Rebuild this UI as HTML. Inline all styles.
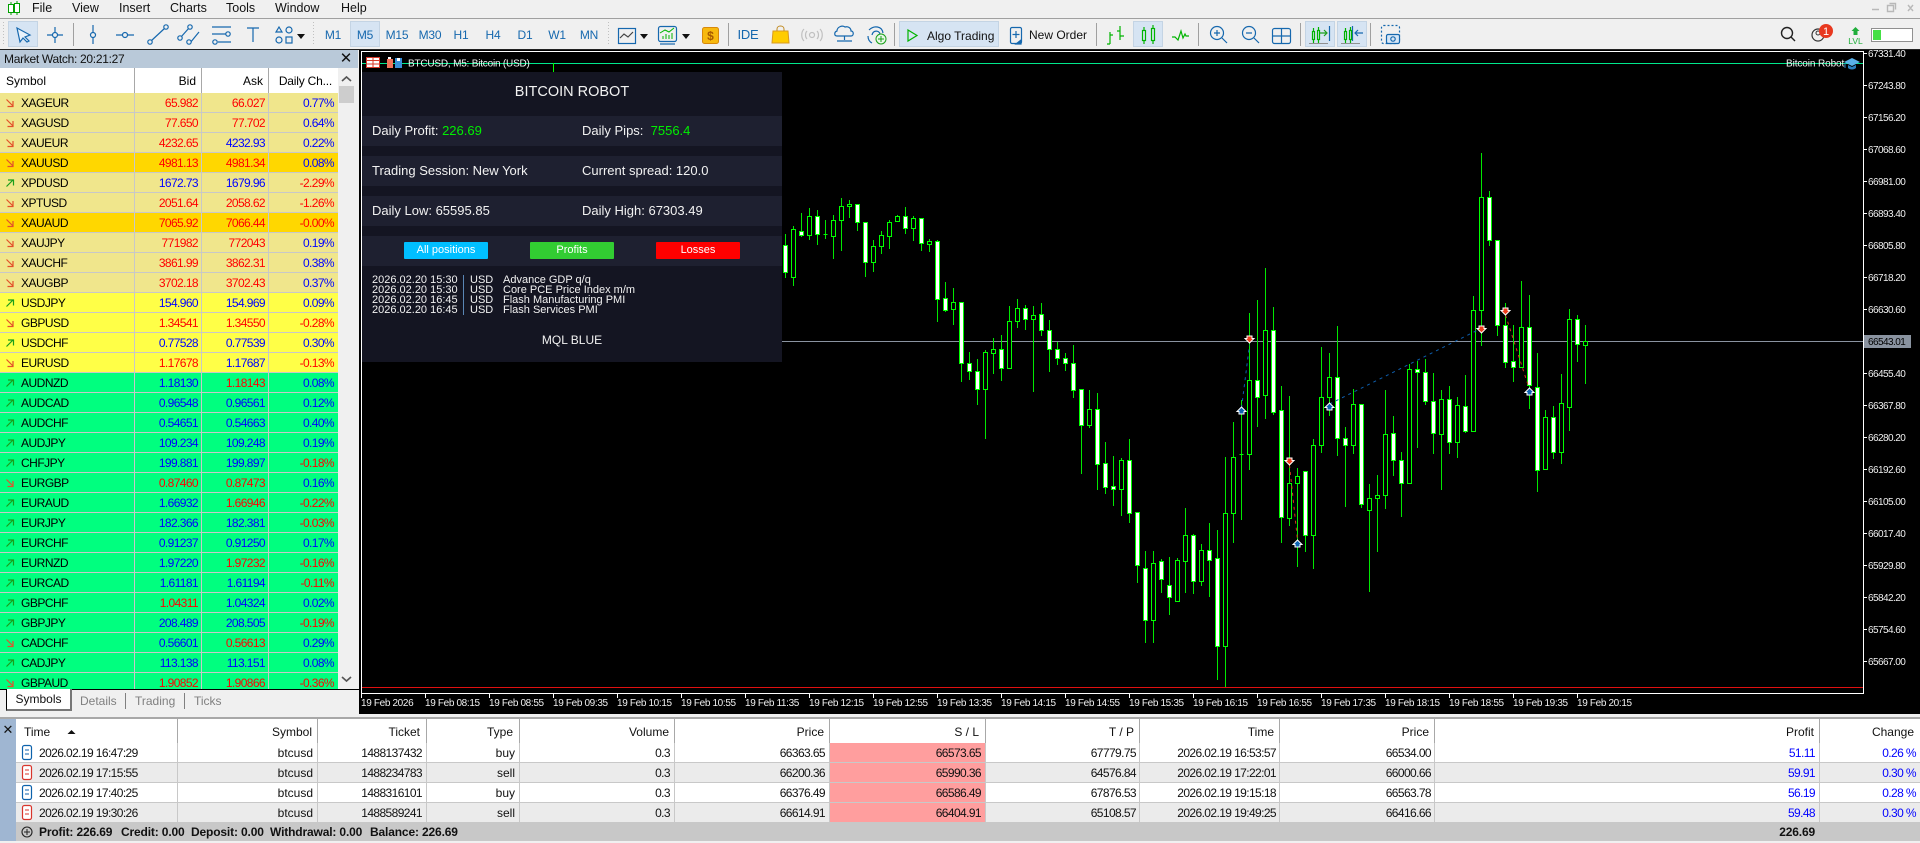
<!DOCTYPE html>
<html><head><meta charset="utf-8"><title>MT5</title>
<style>
html,body{margin:0;padding:0;background:#f0f0f0}
body{position:relative;width:1920px;height:841px;overflow:hidden;font:12px "Liberation Sans",sans-serif;color:#000}
.abs,.r,.m{position:absolute}
.m{top:0;height:16px;line-height:16px;font-size:12.5px;color:#111}
svg{position:absolute;left:0;top:0}
#mw{position:absolute;left:0;top:93px;width:338px;height:596px;overflow:hidden}
.r{left:0;width:338px;height:20px;box-sizing:border-box;border-bottom:1px solid #c8c8c8;line-height:21px}
.r i,.r b{position:absolute;top:0;font-style:normal;font-weight:normal;text-align:right;letter-spacing:-.6px}
.r i{left:21px;text-align:left;letter-spacing:-.5px}
.r b:nth-of-type(1){left:134px;width:64px}
.r b:nth-of-type(2){left:201px;width:64px}
.r b:nth-of-type(3){left:268px;width:66px}
.r u{position:absolute;top:0;width:1px;height:20px;background:#c8c8c8}
.r svg{left:5px;top:5px;width:10px;height:10px}
.k{background:#f0e68c}.g{background:#ffd700}.y{background:#ffff47}.s{background:#00ff7f}
.q{color:#f00!important}.w{color:#00f!important}
.h{position:absolute;top:69px;height:24px;line-height:24px;text-align:right}
.t{position:absolute;left:0;width:1920px;height:20px;box-sizing:border-box;border-bottom:1px solid #c8c8c8;line-height:21px}
.t span{position:absolute;top:0;left:0;text-align:right;color:#111;white-space:nowrap}
.t .n{letter-spacing:-.6px}
.t .p{color:#00f;letter-spacing:-.6px}
.th{position:absolute;top:722px;left:0;text-align:right;line-height:20px;color:#111}
.sl{position:absolute;left:830px;width:155px;height:19px;top:0;background:#ff9e9e}
#pn{position:absolute;left:362px;top:72px;width:420px;height:290px;background:#141522;color:#f2f2f2;font-size:13px}
#pn div{position:absolute}
.row{left:0;width:420px;height:30px;background:#1e2030}
.tx{line-height:30px;white-space:nowrap;top:0}
.btn{top:6px;width:84px;height:17px;line-height:17px;text-align:center;font-size:11px;color:#fff;border-radius:1px}
.nw{font-size:11px;line-height:10px;left:10px;white-space:nowrap}
.ft{position:absolute;top:822px;line-height:21px;font-weight:bold;color:#111;white-space:nowrap;letter-spacing:-.15px}
</style></head><body>

<!-- chart + chrome background -->
<div class="abs" style="left:0;top:18px;width:1920px;height:1px;background:#a0a0a0"></div>
<div class="abs" style="left:0;top:49px;width:1920px;height:1px;background:#222"></div>
<div class="abs" style="left:359px;top:50px;width:1561px;height:664px;background:#000"></div>
<div class="abs" style="left:0;top:717px;width:1920px;height:2px;background:#a8a8a8"></div>

<svg width="1920" height="841" viewBox="0 0 1920 841" font-family="Liberation Sans, sans-serif">
<!-- frame -->
<path d="M361.5 51.5H1863.5V693.5H361.5z" fill="none" stroke="#fff"/>
<path d="M362 63.5H1863" stroke="#00e88c"/>
<path d="M553.5 63V72" stroke="#00ff00"/>
<path d="M362 687.5H1863" stroke="#e01010"/>
<path d="M362 341.5H1863" stroke="#8a93a0"/>
<!-- candles -->
<g shape-rendering="crispEdges" stroke="#00e800" fill="none">
<path transform="translate(.5,0)" d="M785 234V278M793 226V286M801 213V237M809 208V240M817 210V245M825 220V239M833 215V259M841 198V251M849 200V218M857 204V231M865 222V277M873 240V272M881 231V254M889 220V249M897 215V222M905 207V234M913 216V241M921 218V251M929 239V252M937 240V322M945 282V312M953 288V325M961 302V382M969 352V380M977 359V405M985 350V439M993 338V374M1001 335V381M1009 306V369M1017 299V328M1025 305V330M1033 306V392M1041 303V336M1049 320V372M1057 342V365M1065 353V371M1073 345V398M1081 389V474M1089 390V428M1097 393V490M1105 442V494M1113 456V506M1121 458V516M1129 439V523M1137 512V583M1145 551V643M1153 551V643M1161 559V593M1169 557V615M1177 558V602M1185 508V593M1193 534V594M1201 544V586M1209 523V597M1217 530V680M1225 457V687M1233 422V543M1241 400V520M1249 313V470M1257 300V427M1265 268V419M1273 307V415M1281 386V543M1289 396V526M1297 468V567M1305 471V552M1313 439V569M1321 347V453M1329 353V416M1337 326V456M1345 427V507M1353 389V454M1361 404V508M1369 484V592M1377 475V552M1385 390V509M1393 416V476M1401 452V517M1409 364V484M1417 361V448M1425 359V405M1433 373V454M1441 390V490M1449 386V454M1457 397V458M1465 375V433M1473 296V431M1481 153V346M1489 191V246M1497 240V336M1505 303V368M1513 325V382M1521 281V368M1529 295V409M1537 353V492M1545 410V470M1553 406V459M1561 374V464M1569 309V431M1577 315V362M1585 325V384"/>
<path transform="translate(.5,.5)" stroke="#00ff00" fill="#fff" d="M783 245h4v27h-4zM799 231h4v4h-4zM815 216h4v18h-4zM855 204h4v18h-4zM863 222h4v40h-4zM903 216h4v12h-4zM919 218h4v25h-4zM935 241h4v58h-4zM943 298h4v12h-4zM959 302h4v61h-4zM967 363h4v8h-4zM975 371h4v18h-4zM999 349h4v19h-4zM1023 308h4v11h-4zM1039 314h4v16h-4zM1047 330h4v19h-4zM1055 349h4v9h-4zM1063 358h4v5h-4zM1071 363h4v27h-4zM1079 389h4v36h-4zM1095 409h4v55h-4zM1103 463h4v24h-4zM1111 486h4v3h-4zM1127 460h4v53h-4zM1135 512h4v53h-4zM1143 568h4v52h-4zM1159 561h4v18h-4zM1167 585h4v12h-4zM1191 535h4v46h-4zM1207 550h4v10h-4zM1215 558h4v88h-4zM1255 380h4v17h-4zM1271 330h4v82h-4zM1279 410h4v107h-4zM1303 471h4v64h-4zM1335 377h4v61h-4zM1343 438h4v7h-4zM1359 404h4v100h-4zM1391 433h4v27h-4zM1399 460h4v23h-4zM1415 369h4v3h-4zM1423 372h4v29h-4zM1431 401h4v32h-4zM1447 399h4v43h-4zM1463 406h4v25h-4zM1487 197h4v43h-4zM1495 240h4v85h-4zM1503 325h4v37h-4zM1511 361h4v6h-4zM1527 327h4v58h-4zM1535 387h4v83h-4zM1551 417h4v35h-4zM1575 319h4v25h-4z"/>
<path transform="translate(.5,.5)" stroke="#00ff00" fill="#000" d="M791 229h4v48h-4zM807 216h4v19h-4zM823 234h4v0h-4zM831 220h4v16h-4zM839 206h4v14h-4zM847 204h4v2h-4zM871 246h4v16h-4zM879 235h4v11h-4zM887 222h4v14h-4zM895 216h4v5h-4zM911 218h4v10h-4zM927 241h4v3h-4zM951 302h4v7h-4zM983 352h4v37h-4zM991 349h4v4h-4zM1007 321h4v47h-4zM1015 308h4v13h-4zM1031 315h4v4h-4zM1087 409h4v16h-4zM1119 460h4v29h-4zM1151 563h4v57h-4zM1175 560h4v41h-4zM1183 535h4v26h-4zM1199 550h4v31h-4zM1223 513h4v133h-4zM1231 457h4v56h-4zM1239 454h4v0h-4zM1247 380h4v74h-4zM1263 330h4v65h-4zM1287 483h4v35h-4zM1295 476h4v7h-4zM1311 445h4v90h-4zM1319 397h4v48h-4zM1327 377h4v20h-4zM1351 404h4v41h-4zM1367 498h4v12h-4zM1375 495h4v3h-4zM1383 434h4v61h-4zM1407 369h4v114h-4zM1439 399h4v35h-4zM1455 405h4v37h-4zM1471 310h4v121h-4zM1479 197h4v113h-4zM1519 327h4v40h-4zM1543 417h4v52h-4zM1559 403h4v49h-4zM1567 319h4v88h-4zM1583 341h4v4h-4z"/>
</g>
<!-- trade lines -->
<path d="M1241.5 408L1249.5 345M1329.5 404L1478 330" stroke="#0e5fae" stroke-dasharray="3 4" fill="none"/>
<path d="M1289.5 465L1297.5 540M1505.5 315L1529 388" stroke="#d2391e" stroke-dasharray="3 4" fill="none"/>
<!-- arrows -->
<g stroke="#fff" stroke-width="1" fill="#0e62b0">
<path d="M1241.500 407l4.500 4.500h-2v2.500h-5v-2.500h-2z"/><path d="M1297.500 540l4.500 4.500h-2v2.500h-5v-2.500h-2z"/><path d="M1329.500 403l4.500 4.500h-2v2.500h-5v-2.500h-2z"/><path d="M1529.500 388l4.500 4.500h-2v2.500h-5v-2.500h-2z"/>
</g>
<g stroke="#fff" stroke-width="1" fill="#ee3d1c">
<path d="M1249.500 343l4.500-4.500h-2v-2.500h-5v2.500h-2z"/><path d="M1289.500 465l4.500-4.500h-2v-2.500h-5v2.500h-2z"/><path d="M1481.500 333l4.500-4.500h-2v-2.500h-5v2.500h-2z"/><path d="M1505.500 315l4.500-4.500h-2v-2.500h-5v2.500h-2z"/>
</g>
<!-- chart title -->
<g fill="none" stroke-width="1">
<rect x="366.5" y="57.5" width="13" height="10" fill="#fff" stroke="#d83a2a"/><path d="M367 60.5h12M367 64h12M373 58v9" stroke="#d83a2a"/>
<rect x="387" y="59" width="6" height="9" fill="#f0735a"/><rect x="388" y="57" width="3" height="2" fill="#fff"/><rect x="395" y="58" width="7" height="10" fill="#3a8fd8"/><rect x="397" y="58" width="3" height="3" fill="#fff"/>
</g>
<text x="408" y="66.5" font-size="10" fill="#f4f4f4" letter-spacing="-.2">BTCUSD, M5:  Bitcoin (USD)</text>
<text x="1786" y="66.5" font-size="10" fill="#f4f4f4" letter-spacing="-.1">Bitcoin Robot</text>
<path d="M1844 62l8-4 8 4-8 4z" fill="#5ab0e8"/><path d="M1848 65v3c2 2 6 2 8 0v-3l-4 2z" fill="#2a7fc0"/><path d="M1845 63v5" stroke="#2a7fc0"/>
<!-- price axis -->
<path d="M1863 53.5h4M1863 85.5h4M1863 117.5h4M1863 149.5h4M1863 181.5h4M1863 213.5h4M1863 245.5h4M1863 277.5h4M1863 309.5h4M1863 373.5h4M1863 405.5h4M1863 437.5h4M1863 469.5h4M1863 501.5h4M1863 533.5h4M1863 565.5h4M1863 597.5h4M1863 629.5h4M1863 661.5h4" stroke="#fff"/>
<g font-size="10" fill="#f0f0f0" letter-spacing="-.55">
<text x="1868" y="57">67331.40</text><text x="1868" y="89">67243.80</text><text x="1868" y="121">67156.20</text><text x="1868" y="153">67068.60</text><text x="1868" y="185">66981.00</text><text x="1868" y="217">66893.40</text><text x="1868" y="249">66805.80</text><text x="1868" y="281">66718.20</text><text x="1868" y="313">66630.60</text><text x="1868" y="377">66455.40</text><text x="1868" y="409">66367.80</text><text x="1868" y="441">66280.20</text><text x="1868" y="473">66192.60</text><text x="1868" y="505">66105.00</text><text x="1868" y="537">66017.40</text><text x="1868" y="569">65929.80</text><text x="1868" y="601">65842.20</text><text x="1868" y="633">65754.60</text><text x="1868" y="665">65667.00</text>
</g>
<rect x="1864" y="335" width="47" height="13" fill="#8a93a0"/>
<text x="1868" y="345" font-size="10" fill="#000" letter-spacing="-.55">66543.01</text>
<!-- time axis -->
<path d="M361.5 693v5M425.5 693v5M489.5 693v5M553.5 693v5M617.5 693v5M681.5 693v5M745.5 693v5M809.5 693v5M873.5 693v5M937.5 693v5M1001.5 693v5M1065.5 693v5M1129.5 693v5M1193.5 693v5M1257.5 693v5M1321.5 693v5M1385.5 693v5M1449.5 693v5M1513.5 693v5M1577.5 693v5" stroke="#fff"/>
<g font-size="10" fill="#f0f0f0" letter-spacing="-.35">
<text x="361" y="706">19 Feb 2026</text><text x="425" y="706">19 Feb 08:15</text><text x="489" y="706">19 Feb 08:55</text><text x="553" y="706">19 Feb 09:35</text><text x="617" y="706">19 Feb 10:15</text><text x="681" y="706">19 Feb 10:55</text><text x="745" y="706">19 Feb 11:35</text><text x="809" y="706">19 Feb 12:15</text><text x="873" y="706">19 Feb 12:55</text><text x="937" y="706">19 Feb 13:35</text><text x="1001" y="706">19 Feb 14:15</text><text x="1065" y="706">19 Feb 14:55</text><text x="1129" y="706">19 Feb 15:35</text><text x="1193" y="706">19 Feb 16:15</text><text x="1257" y="706">19 Feb 16:55</text><text x="1321" y="706">19 Feb 17:35</text><text x="1385" y="706">19 Feb 18:15</text><text x="1449" y="706">19 Feb 18:55</text><text x="1513" y="706">19 Feb 19:35</text><text x="1577" y="706">19 Feb 20:15</text>
</g>

<!-- logo -->
<path d="M11 2v13M17 1v14" stroke="#00a000"/><rect x="8.5" y="4.5" width="5" height="8" fill="#fff" stroke="#00a000"/><rect x="14.5" y="3.5" width="5" height="9" fill="#fff" stroke="#00a000"/>
<!-- toolbar highlights -->
<g fill="#d6e4f3" stroke="#c4d4e4">
<rect x="8.5" y="21.5" width="29" height="25"/><rect x="350.5" y="21.5" width="29" height="25"/><rect x="899.5" y="21.5" width="99" height="25"/><rect x="1133.5" y="21.5" width="29" height="25"/><rect x="1305.5" y="21.5" width="29" height="25"/><rect x="1337.5" y="21.5" width="29" height="25"/>
</g>
<!-- separators + grippers -->
<path d="M73.5 23v23M728.5 23v23M894.5 23v23M1096.5 23v23M1198.5 23v23M1300.5 23v23M1370.5 23v23" stroke="#a0a0a0"/>
<path d="M3.5 22v24M313.5 22v24M608.5 22v24" stroke="#c0c0c0" stroke-dasharray="1 2"/>
<!-- tools -->
<g fill="none" stroke="#1668ae" stroke-width="1.2">
<path d="M17 28l13 7-5 2 4 4-2 1-4-4-3 4z" fill="#e8f2fb"/>
<path d="M47 35h16M55 27v16"/><circle cx="55" cy="35" r="2.5" fill="#f0f0f0"/>
<path d="M93 25v19"/><circle cx="93" cy="35" r="2.5" fill="#f0f0f0"/>
<path d="M116 35h18"/><circle cx="125" cy="35" r="2.5" fill="#f0f0f0"/>
<path d="M151 41l14-13"/><circle cx="150" cy="42" r="2.2" fill="#f0f0f0"/><circle cx="166" cy="27" r="2.2" fill="#f0f0f0"/>
<path d="M181 37l8-9M190 43l9-11"/><circle cx="180" cy="38" r="2.2" fill="#f0f0f0"/><circle cx="190" cy="27" r="2.2" fill="#f0f0f0"/><circle cx="189" cy="42" r="2.2" fill="#f0f0f0"/>
<path d="M212 27h19M212 34h14M218 42h13"/><circle cx="228" cy="34" r="2.2" fill="#f0f0f0"/><circle cx="215" cy="42" r="2.2" fill="#f0f0f0"/>
<path d="M247 28h12M253 28v14"/>
<path d="M279 27l3 5h-6z"/><circle cx="289" cy="30" r="3"/><circle cx="279" cy="40" r="3"/><rect x="286" y="37" width="6" height="6"/>
<rect x="618.5" y="28.5" width="17" height="15"/><path d="M620 38l4-4 4 3 5-5" stroke="#444"/>
<rect x="658.5" y="26.5" width="18" height="15" rx="2"/><path d="M660 44h15"/>
<path d="M837 36c-3 0-3-4 0-5 0-4 5-6 8-4 3-1 6 1 6 4 3 0 3 5 0 5zM844.500 36v4M837 41h15"/>
<path d="M869 30c5-5 13-4 14 3M872 35c1-5 7-5 8-1M868 36c0 4 2 6 4 7"/>
<rect x="1010.5" y="27.5" width="11" height="16" rx="1.5"/><path d="M1016 31v7M1012.5 34.5h7"/><path d="M1016 44l5-4v4z" fill="#1668ae"/>
<circle cx="1217" cy="33" r="6.5"/><path d="M1222 38l5 5M1214 33h6M1217 30v6"/>
<circle cx="1249" cy="33" r="6.5"/><path d="M1254 38l5 5M1246 33h6"/>
<rect x="1272.5" y="28.5" width="18" height="15" rx="2"/><path d="M1281.5 29v14M1273 36h17"/>
<path d="M1320 33h7M1324 30l3 3-3 3" stroke="#1ba01b"/><path d="M1329.5 26v15" stroke="#1668ae"/>
<path d="M1355 33h8M1358 30l-3 3 3 3M1352.5 26v15"/>
<rect x="1381.5" y="25.5" width="18" height="18" rx="2" stroke-dasharray="2 2"/><rect x="1386.5" y="34.5" width="13" height="9" rx="1.5" fill="#d6e6f6"/><circle cx="1393" cy="39" r="2.2"/>
</g>
<path d="M1309 43.5h19M1341 43.5h19" stroke="#909090"/>
<path d="M297 34h8l-4 5zM640 34h8l-4 5zM682 34h8l-4 5z" fill="#111"/>
<g fill="none" stroke="#00b400" stroke-width="1.2">
<path d="M663 39v-3M666 39v-5M669 39v-4M672 39v-6M660 33l5-3 4 2 5-4" stroke-width="1"/>
<path d="M908 30l9 5.5-9 5.5z"/>
<path d="M1110 32v12M1107 44h3M1110 35h3M1120 26v14M1120 31h-3M1120 36h4"/>
<rect x="1142.5" y="30.5" width="3" height="10"/><rect x="1151.5" y="28.5" width="3" height="12"/><path d="M1144 27v3M1144 41v3M1153 25v3M1153 41v3"/>
<path d="M1172 37h3l3 3 3-9 2 7 2-4 1 2h3"/>
<rect x="1312.5" y="31.5" width="2" height="8"/><rect x="1317.5" y="30.5" width="2" height="9"/><path d="M1313.5 28v3M1313.5 40v3M1318.5 27v3M1318.5 40v3"/>
<rect x="1344.5" y="31.5" width="2" height="8"/><rect x="1349.5" y="30.5" width="2" height="9"/><path d="M1345.5 28v3M1345.5 40v3M1350.5 27v3M1350.5 40v3"/>
</g>
<rect x="702.5" y="27.5" width="16" height="16" rx="2" fill="#f7b90f" stroke="#d8890b"/><text x="710.5" y="40" font-size="12" font-weight="bold" fill="#a85a00" text-anchor="middle">$</text>
<path d="M773 31h15l1 12h-17z" fill="#ffcc00" stroke="#d89a20"/><path d="M777 31v-2c0-4 7-4 7 0v2" fill="none" stroke="#c08a20"/>
<g fill="none" stroke="#c0c0c0" stroke-width="1.2"><circle cx="812" cy="35" r="2.5"/><path d="M807 31c-2 2-2 6 0 8M817 31c2 2 2 6 0 8M804 29c-3 3-3 9 0 12M820 29c3 3 3 9 0 12"/></g>
<circle cx="881" cy="39" r="5" fill="#e8f8e8" stroke="#19a019"/><path d="M881 36v6M878 39h6" stroke="#19a019"/>
<!-- right side -->
<circle cx="1787" cy="33" r="5.5" fill="none" stroke="#222" stroke-width="1.4"/><path d="M1791 37l4 4" stroke="#222" stroke-width="1.4"/>
<circle cx="1818" cy="35" r="6" fill="none" stroke="#333" stroke-width="1.2"/><circle cx="1818" cy="33" r="2" fill="none" stroke="#333"/>
<circle cx="1826" cy="31" r="7" fill="#e8381f"/><text x="1826" y="35" font-size="11" fill="#fff" text-anchor="middle">1</text>
<path d="M1855.5 27l4 4h-2v4h-4v-4h-2z" fill="#1fae3a"/>
<text x="1855.5" y="44" font-size="8.5" fill="#1fae3a" text-anchor="middle">LVL</text>
<rect x="1871.5" y="28.5" width="41" height="13" fill="#fff" stroke="#909090"/><rect x="1873" y="30" width="8" height="10" fill="#44e044"/>
<path d="M1872 9.5h7M1887.5 5.5h6v6h-6zM1889.5 3.5h6v6M1908 5l5 6M1913 5l-5 6" stroke="#b8b8b8" fill="none" stroke-width="1.4"/>
<!-- toolbar text -->
<g font-size="12" fill="#1668ae" text-anchor="middle" letter-spacing="-.2">
<text x="333" y="39">M1</text><text x="365" y="39">M5</text><text x="397" y="39">M15</text><text x="430" y="39">M30</text><text x="461" y="39">H1</text><text x="493" y="39">H4</text><text x="525" y="39">D1</text><text x="557" y="39">W1</text><text x="589" y="39">MN</text><text x="748" y="39" font-size="13">IDE</text>
</g>
<text x="927" y="40" font-size="12" fill="#111">Algo Trading</text>
<text x="1029" y="39" font-size="12" fill="#111">New Order</text>
</svg>

<!-- Menu -->
<div class="m" style="left:32px">File</div><div class="m" style="left:72px">View</div><div class="m" style="left:119px">Insert</div><div class="m" style="left:170px">Charts</div><div class="m" style="left:226px">Tools</div><div class="m" style="left:275px">Window</div><div class="m" style="left:341px">Help</div>

<!-- Market Watch -->
<div class="abs" style="left:0;top:50px;width:358px;height:18px;background:#b9c9d9;line-height:19px;padding-left:4px;box-sizing:border-box;letter-spacing:-.3px;color:#111">Market Watch: 20:21:27</div>
<div class="abs" style="left:339px;top:50px;width:14px;height:18px;line-height:18px;text-align:center;font-size:15px;color:#111">✕</div>
<div class="abs" style="left:0;top:68px;width:338px;height:25px;background:#fff"></div>
<div class="h" style="left:6px;text-align:left">Symbol</div>
<div class="h" style="left:135px;width:61px">Bid</div>
<div class="h" style="left:202px;width:61px">Ask</div>
<div class="h" style="left:269px;width:63px;letter-spacing:-.2px">Daily Ch...</div>
<div class="abs" style="left:134px;top:68px;width:1px;height:25px;background:#a8a8a8"></div>
<div class="abs" style="left:201px;top:68px;width:1px;height:25px;background:#a8a8a8"></div>
<div class="abs" style="left:268px;top:68px;width:1px;height:25px;background:#a8a8a8"></div>
<!-- scrollbar -->
<div class="abs" style="left:339px;top:86px;width:15px;height:17px;background:#cdcdcd"></div>
<svg width="360" height="700" style="pointer-events:none"><path d="M342 81l4.500-4 4.500 4M342 677l4.500 4 4.500-4" fill="none" stroke="#555" stroke-width="1.600"/>
<defs>
<symbol id="d" viewBox="0 0 10 10"><path d="M1.500 1.500L8 8M8 3v5.500H2.500" fill="none" stroke="#e2502a" stroke-width="1.200"/></symbol>
<symbol id="u" viewBox="0 0 10 10"><path d="M1.500 8.500L8 2M3 2h5.500v5.500" fill="none" stroke="#1a9e1a" stroke-width="1.200"/></symbol>
</defs></svg>

<div id="mw">
<div class="r k" style="top:0"><svg><use href="#d"/></svg><i>XAGEUR</i><b class="q">65.982</b><b class="q">66.027</b><b class="w">0.77%</b><u style="left:134px"></u><u style="left:201px"></u><u style="left:268px"></u></div>
<div class="r k" style="top:20px"><svg><use href="#d"/></svg><i>XAGUSD</i><b class="q">77.650</b><b class="q">77.702</b><b class="w">0.64%</b><u style="left:134px"></u><u style="left:201px"></u><u style="left:268px"></u></div>
<div class="r k" style="top:40px"><svg><use href="#d"/></svg><i>XAUEUR</i><b class="q">4232.65</b><b class="w">4232.93</b><b class="w">0.22%</b><u style="left:134px"></u><u style="left:201px"></u><u style="left:268px"></u></div>
<div class="r g" style="top:60px"><svg><use href="#d"/></svg><i>XAUUSD</i><b class="q">4981.13</b><b class="q">4981.34</b><b class="w">0.08%</b><u style="left:134px"></u><u style="left:201px"></u><u style="left:268px"></u></div>
<div class="r k" style="top:80px"><svg><use href="#u"/></svg><i>XPDUSD</i><b class="w">1672.73</b><b class="w">1679.96</b><b class="q">-2.29%</b><u style="left:134px"></u><u style="left:201px"></u><u style="left:268px"></u></div>
<div class="r k" style="top:100px"><svg><use href="#d"/></svg><i>XPTUSD</i><b class="q">2051.64</b><b class="q">2058.62</b><b class="q">-1.26%</b><u style="left:134px"></u><u style="left:201px"></u><u style="left:268px"></u></div>
<div class="r g" style="top:120px"><svg><use href="#d"/></svg><i>XAUAUD</i><b class="q">7065.92</b><b class="q">7066.44</b><b class="q">-0.00%</b><u style="left:134px"></u><u style="left:201px"></u><u style="left:268px"></u></div>
<div class="r k" style="top:140px"><svg><use href="#d"/></svg><i>XAUJPY</i><b class="q">771982</b><b class="q">772043</b><b class="w">0.19%</b><u style="left:134px"></u><u style="left:201px"></u><u style="left:268px"></u></div>
<div class="r k" style="top:160px"><svg><use href="#d"/></svg><i>XAUCHF</i><b class="q">3861.99</b><b class="q">3862.31</b><b class="w">0.38%</b><u style="left:134px"></u><u style="left:201px"></u><u style="left:268px"></u></div>
<div class="r k" style="top:180px"><svg><use href="#d"/></svg><i>XAUGBP</i><b class="q">3702.18</b><b class="q">3702.43</b><b class="w">0.37%</b><u style="left:134px"></u><u style="left:201px"></u><u style="left:268px"></u></div>
<div class="r y" style="top:200px"><svg><use href="#u"/></svg><i>USDJPY</i><b class="w">154.960</b><b class="w">154.969</b><b class="w">0.09%</b><u style="left:134px"></u><u style="left:201px"></u><u style="left:268px"></u></div>
<div class="r y" style="top:220px"><svg><use href="#d"/></svg><i>GBPUSD</i><b class="q">1.34541</b><b class="q">1.34550</b><b class="q">-0.28%</b><u style="left:134px"></u><u style="left:201px"></u><u style="left:268px"></u></div>
<div class="r y" style="top:240px"><svg><use href="#u"/></svg><i>USDCHF</i><b class="w">0.77528</b><b class="w">0.77539</b><b class="w">0.30%</b><u style="left:134px"></u><u style="left:201px"></u><u style="left:268px"></u></div>
<div class="r y" style="top:260px"><svg><use href="#d"/></svg><i>EURUSD</i><b class="q">1.17678</b><b class="w">1.17687</b><b class="q">-0.13%</b><u style="left:134px"></u><u style="left:201px"></u><u style="left:268px"></u></div>
<div class="r s" style="top:280px"><svg><use href="#u"/></svg><i>AUDNZD</i><b class="w">1.18130</b><b class="q">1.18143</b><b class="w">0.08%</b><u style="left:134px"></u><u style="left:201px"></u><u style="left:268px"></u></div>
<div class="r s" style="top:300px"><svg><use href="#u"/></svg><i>AUDCAD</i><b class="w">0.96548</b><b class="w">0.96561</b><b class="w">0.12%</b><u style="left:134px"></u><u style="left:201px"></u><u style="left:268px"></u></div>
<div class="r s" style="top:320px"><svg><use href="#u"/></svg><i>AUDCHF</i><b class="w">0.54651</b><b class="w">0.54663</b><b class="w">0.40%</b><u style="left:134px"></u><u style="left:201px"></u><u style="left:268px"></u></div>
<div class="r s" style="top:340px"><svg><use href="#u"/></svg><i>AUDJPY</i><b class="w">109.234</b><b class="w">109.248</b><b class="w">0.19%</b><u style="left:134px"></u><u style="left:201px"></u><u style="left:268px"></u></div>
<div class="r s" style="top:360px"><svg><use href="#u"/></svg><i>CHFJPY</i><b class="w">199.881</b><b class="w">199.897</b><b class="q">-0.18%</b><u style="left:134px"></u><u style="left:201px"></u><u style="left:268px"></u></div>
<div class="r s" style="top:380px"><svg><use href="#d"/></svg><i>EURGBP</i><b class="q">0.87460</b><b class="q">0.87473</b><b class="w">0.16%</b><u style="left:134px"></u><u style="left:201px"></u><u style="left:268px"></u></div>
<div class="r s" style="top:400px"><svg><use href="#u"/></svg><i>EURAUD</i><b class="w">1.66932</b><b class="q">1.66946</b><b class="q">-0.22%</b><u style="left:134px"></u><u style="left:201px"></u><u style="left:268px"></u></div>
<div class="r s" style="top:420px"><svg><use href="#u"/></svg><i>EURJPY</i><b class="w">182.366</b><b class="w">182.381</b><b class="q">-0.03%</b><u style="left:134px"></u><u style="left:201px"></u><u style="left:268px"></u></div>
<div class="r s" style="top:440px"><svg><use href="#u"/></svg><i>EURCHF</i><b class="w">0.91237</b><b class="w">0.91250</b><b class="w">0.17%</b><u style="left:134px"></u><u style="left:201px"></u><u style="left:268px"></u></div>
<div class="r s" style="top:460px"><svg><use href="#u"/></svg><i>EURNZD</i><b class="w">1.97220</b><b class="q">1.97232</b><b class="q">-0.16%</b><u style="left:134px"></u><u style="left:201px"></u><u style="left:268px"></u></div>
<div class="r s" style="top:480px"><svg><use href="#u"/></svg><i>EURCAD</i><b class="w">1.61181</b><b class="w">1.61194</b><b class="q">-0.11%</b><u style="left:134px"></u><u style="left:201px"></u><u style="left:268px"></u></div>
<div class="r s" style="top:500px"><svg><use href="#u"/></svg><i>GBPCHF</i><b class="q">1.04311</b><b class="w">1.04324</b><b class="w">0.02%</b><u style="left:134px"></u><u style="left:201px"></u><u style="left:268px"></u></div>
<div class="r s" style="top:520px"><svg><use href="#u"/></svg><i>GBPJPY</i><b class="w">208.489</b><b class="w">208.505</b><b class="q">-0.19%</b><u style="left:134px"></u><u style="left:201px"></u><u style="left:268px"></u></div>
<div class="r s" style="top:540px"><svg><use href="#d"/></svg><i>CADCHF</i><b class="w">0.56601</b><b class="q">0.56613</b><b class="w">0.29%</b><u style="left:134px"></u><u style="left:201px"></u><u style="left:268px"></u></div>
<div class="r s" style="top:560px"><svg><use href="#u"/></svg><i>CADJPY</i><b class="w">113.138</b><b class="w">113.151</b><b class="w">0.08%</b><u style="left:134px"></u><u style="left:201px"></u><u style="left:268px"></u></div>
<div class="r s" style="top:580px"><svg><use href="#d"/></svg><i>GBPAUD</i><b class="q">1.90852</b><b class="q">1.90866</b><b class="q">-0.36%</b><u style="left:134px"></u><u style="left:201px"></u><u style="left:268px"></u></div>
</div>
<!-- tabs -->
<div class="abs" style="left:0;top:689px;width:359px;height:1px;background:#000"></div>
<div class="abs" style="left:6px;top:689px;width:63px;height:20px;background:#fff;border:1px solid #000;border-top:0;border-right:2px solid #777;border-bottom:2px solid #777;text-align:center;line-height:20px;color:#111">Symbols</div>
<div class="abs" style="left:80px;top:691px;line-height:20px;color:#808080">Details</div>
<div class="abs" style="left:125px;top:693px;width:1px;height:16px;background:#808080"></div>
<div class="abs" style="left:135px;top:691px;line-height:20px;color:#808080">Trading</div>
<div class="abs" style="left:184px;top:693px;width:1px;height:16px;background:#808080"></div>
<div class="abs" style="left:194px;top:691px;line-height:20px;color:#808080">Ticks</div>

<!-- Panel -->
<div id="pn">
<div style="left:0;width:420px;top:9px;line-height:22px;text-align:center;font-size:14.5px">BITCOIN ROBOT</div>
<div class="row" style="top:44px"><div class="tx" style="left:10px">Daily Profit: <span style="color:#00f000">226.69</span></div><div class="tx" style="left:220px">Daily Pips:&nbsp; <span style="color:#00f000">7556.4</span></div></div>
<div class="row" style="top:84px"><div class="tx" style="left:10px">Trading Session: New York</div><div class="tx" style="left:220px">Current spread: 120.0</div></div>
<div class="row" style="top:124px"><div class="tx" style="left:10px">Daily Low: 65595.85</div><div class="tx" style="left:220px">Daily High: 67303.49</div></div>
<div class="row" style="top:164px"><div class="btn" style="left:42px;background:#00bfff">All positions</div><div class="btn" style="left:168px;background:#32cd32">Profits</div><div class="btn" style="left:294px;background:#f00">Losses</div></div>
<div class="nw" style="top:203px">2026.02.20 15:30</div><div class="nw" style="top:213px">2026.02.20 15:30</div><div class="nw" style="top:223px">2026.02.20 16:45</div><div class="nw" style="top:233px">2026.02.20 16:45</div>
<div style="left:101px;top:203px;width:1px;height:40px;background:#5a86b4"></div>
<div class="nw" style="top:203px;left:108px">USD</div><div class="nw" style="top:213px;left:108px">USD</div><div class="nw" style="top:223px;left:108px">USD</div><div class="nw" style="top:233px;left:108px">USD</div>
<div class="nw" style="top:203px;left:141px">Advance GDP q/q</div><div class="nw" style="top:213px;left:141px">Core PCE Price Index m/m</div><div class="nw" style="top:223px;left:141px">Flash Manufacturing PMI</div><div class="nw" style="top:233px;left:141px">Flash Services PMI</div>
<div style="left:0;width:420px;top:260px;line-height:16px;text-align:center;font-size:12px">MQL BLUE</div>
</div>

<!-- Trade table -->
<div class="abs" style="left:0;top:719px;width:1920px;height:24px;background:#fff"></div>
<div class="th" style="left:24px">Time</div>
<div class="th" style="width:312px">Symbol</div><div class="th" style="width:420px">Ticket</div><div class="th" style="width:513px">Type</div><div class="th" style="width:669px">Volume</div><div class="th" style="width:824px">Price</div><div class="th" style="width:979px">S / L</div><div class="th" style="width:1134px">T / P</div><div class="th" style="width:1274px">Time</div><div class="th" style="width:1429px">Price</div><div class="th" style="width:1814px">Profit</div><div class="th" style="width:1914px">Change</div>

<div class="t" style="top:743px;background:#fff"><div class="sl"></div><span class="n" style="left:39px">2026.02.19 16:47:29</span><span style="width:313px">btcusd</span><span class="n" style="width:422px">1488137432</span><span style="width:515px">buy</span><span class="n" style="width:670px">0.3</span><span class="n" style="width:825px">66363.65</span><span class="n" style="width:981px">66573.65</span><span class="n" style="width:1136px">67779.75</span><span class="n" style="width:1276px">2026.02.19 16:53:57</span><span class="n" style="width:1431px">66534.00</span><span class="p" style="width:1815px">51.11</span><span class="p" style="width:1916px">0.26 %</span></div>
<div class="t" style="top:763px;background:#ebebeb"><div class="sl"></div><span class="n" style="left:39px">2026.02.19 17:15:55</span><span style="width:313px">btcusd</span><span class="n" style="width:422px">1488234783</span><span style="width:515px">sell</span><span class="n" style="width:670px">0.3</span><span class="n" style="width:825px">66200.36</span><span class="n" style="width:981px">65990.36</span><span class="n" style="width:1136px">64576.84</span><span class="n" style="width:1276px">2026.02.19 17:22:01</span><span class="n" style="width:1431px">66000.66</span><span class="p" style="width:1815px">59.91</span><span class="p" style="width:1916px">0.30 %</span></div>
<div class="t" style="top:783px;background:#fff"><div class="sl"></div><span class="n" style="left:39px">2026.02.19 17:40:25</span><span style="width:313px">btcusd</span><span class="n" style="width:422px">1488316101</span><span style="width:515px">buy</span><span class="n" style="width:670px">0.3</span><span class="n" style="width:825px">66376.49</span><span class="n" style="width:981px">66586.49</span><span class="n" style="width:1136px">67876.53</span><span class="n" style="width:1276px">2026.02.19 19:15:18</span><span class="n" style="width:1431px">66563.78</span><span class="p" style="width:1815px">56.19</span><span class="p" style="width:1916px">0.28 %</span></div>
<div class="t" style="top:803px;height:19px;background:#ebebeb;border-bottom:0"><div class="sl"></div><span class="n" style="left:39px">2026.02.19 19:30:26</span><span style="width:313px">btcusd</span><span class="n" style="width:422px">1488589241</span><span style="width:515px">sell</span><span class="n" style="width:670px">0.3</span><span class="n" style="width:825px">66614.91</span><span class="n" style="width:981px">66404.91</span><span class="n" style="width:1136px">65108.57</span><span class="n" style="width:1276px">2026.02.19 19:49:25</span><span class="n" style="width:1431px">66416.66</span><span class="p" style="width:1815px">59.48</span><span class="p" style="width:1916px">0.30 %</span></div>

<div class="abs" style="left:0;top:822px;width:1920px;height:19px;background:#c8c8c8"></div>
<div class="ft" style="left:39px">Profit: 226.69</div><div class="ft" style="left:121px">Credit: 0.00</div><div class="ft" style="left:191px">Deposit: 0.00</div><div class="ft" style="left:270px">Withdrawal: 0.00</div><div class="ft" style="left:370px">Balance: 226.69</div>
<div class="ft" style="left:0;width:1815px;text-align:right">226.69</div>

<div class="abs" style="left:0;top:719px;width:16px;height:122px;background:#9fb6d2"></div>
<div class="abs" style="left:0;top:721px;width:16px;line-height:18px;text-align:center;font-size:13px;color:#111">✕</div>

<svg width="1920" height="841" style="pointer-events:none">
<path d="M71.500 730l4 4h-8z" fill="#111"/>
<path d="M177.500 719v24M317.500 719v24M426.500 719v24M519.500 719v24M674.500 719v24M829.500 719v24M985.500 719v24M1139.500 719v24M1279.500 719v24M1434.500 719v24M1819.500 719v24" stroke="#a8a8a8"/>
<path d="M177.500 743v79M317.500 743v79M426.500 743v79M519.500 743v79M674.500 743v79M829.500 743v79M985.500 743v79M1139.500 743v79M1279.500 743v79M1434.500 743v79M1819.500 743v79" stroke="#c8c8c8"/>
<g fill="#fff" stroke-width="1.200">
<rect x="22.500" y="745.500" width="9" height="14" rx="2" stroke="#0d62ac"/><rect x="22.500" y="765.500" width="9" height="14" rx="2" stroke="#d8342a"/><rect x="22.500" y="785.500" width="9" height="14" rx="2" stroke="#0d62ac"/><rect x="22.500" y="805.500" width="9" height="14" rx="2" stroke="#d8342a"/>
</g>
<path d="M25 750h4M25 754h4" stroke="#0d62ac"/><path d="M25 770h4M25 774h4" stroke="#d8342a"/><path d="M25 790h4M25 794h4" stroke="#0d62ac"/><path d="M25 810h4M25 814h4" stroke="#d8342a"/>
<circle cx="27" cy="832" r="5" fill="none" stroke="#222" stroke-width="1.100"/><path d="M24 832h6M27 829v6" stroke="#222"/>
</svg>
</body></html>
